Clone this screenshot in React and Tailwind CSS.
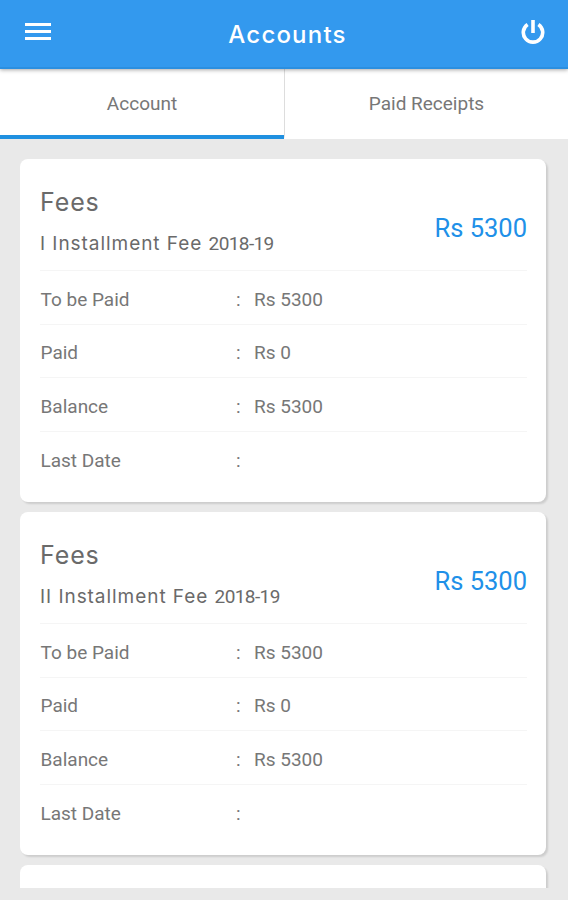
import React, { useState } from "react";

const tabs = ["Account", "Paid Receipts"];

const installments = [
  {
    title: "I Installment Fee",
    year: "2018-19",
    amount: "Rs 5300",
    paid: "Rs 0",
    balance: "Rs 5300",
    lastDate: "",
  },
  {
    title: "II Installment Fee",
    year: "2018-19",
    amount: "Rs 5300",
    paid: "Rs 0",
    balance: "Rs 5300",
    lastDate: "",
  },
];

const Header = () => {
  return (
    <header className="relative z-10 grid h-[69px] shrink-0 grid-cols-[1fr_auto_1fr] items-center border-b-2 border-[#2b8fe0] bg-[#3399ee] text-white shadow-[0_1px_4px_rgba(0,0,0,0.35)]">
      <button type="button" aria-label="Menu" className="ml-[25px] -mt-1 w-[26px]">
        <svg width="26" height="18" viewBox="0 0 26 18" fill="currentColor">
          <path d="M0 0h26v3H0zM0 7h26v3H0zM0 14h26v3H0z" />
        </svg>
      </button>
      <h1 className="pt-[2px] pl-[7px] font-['Inter',sans-serif] text-[24px] leading-8 font-medium tracking-[1.2px]">
        Accounts
      </h1>
      <button
        type="button"
        aria-label="Log out"
        className="mr-[23px] -mt-[2px] justify-self-end"
      >
        <svg
          width="24"
          height="26"
          viewBox="0 0 24 26"
          fill="none"
          stroke="currentColor"
          strokeWidth="3.6"
        >
          <path d="M12 0v13" />
          <path d="M6.6 4.4a9.7 9.7 0 1 0 10.8 0" />
        </svg>
      </button>
    </header>
  );
};

const Row = ({ label, value }) => {
  return (
    <div className="flex h-[53.7px] items-center border-t border-[#f5f5f5] pt-[5px] pl-[0.5px] text-[19px] text-[#777]">
      <span className="w-[195.5px]">{label}</span>
      <span className="w-[18px]">:</span>
      <span>{value}</span>
    </div>
  );
};

const FeeCard = ({ item }) => {
  return (
    <section className="h-[343px] shrink-0 rounded-lg bg-white pr-[19px] pl-5 shadow-[2px_2px_2px_rgba(0,0,0,0.12)]">
      <div className="flex h-[111px] items-center justify-between">
        <div className="pt-[15px] font-['Inter',sans-serif] text-[#6a6a6a]">
          <h2 className="text-[25px] leading-[44px] tracking-[0.9px]">Fees</h2>
          <p className="text-[19px] leading-10 tracking-[0.95px]">
            {item.title}{" "}
            <span className="font-['Roboto',sans-serif] tracking-[-0.6px]">
              {item.year}
            </span>
          </p>
        </div>
        <span className="pt-[27px] text-[25.5px] text-[#2090e8]">
          {item.amount}
        </span>
      </div>
      <Row label="To be Paid" value={item.amount} />
      <Row label="Paid" value={item.paid} />
      <Row label="Balance" value={item.balance} />
      <Row label="Last Date" value={item.lastDate} />
    </section>
  );
};

export default function App() {
  const [active, setActive] = useState(0);

  return (
    <div className="flex h-[900px] w-[568px] flex-col overflow-hidden bg-[#e9e9e9] font-['Roboto',sans-serif]">
      <Header />
      <nav className="grid h-[70px] shrink-0 grid-cols-2 bg-white">
        {tabs.map((tab, index) => (
          <button
            key={tab}
            type="button"
            onClick={() => setActive(index)}
            className={`border-b-4 pt-[5px] text-[19px] text-[#777] ${
              index === active ? "border-b-[#2090e0]" : "border-b-white"
            } ${index ? "border-l border-l-[#ddd]" : ""}`}
          >
            {tab}
          </button>
        ))}
      </nav>
      <main className="mt-5 flex h-[729px] flex-col gap-2.5 overflow-hidden pr-[22px] pl-5">
        {installments.map((item) => (
          <FeeCard key={item.title} item={item} />
        ))}
        <section className="h-[343px] shrink-0 rounded-lg bg-white shadow-[2px_2px_2px_rgba(0,0,0,0.12)]" />
      </main>
    </div>
  );
}
